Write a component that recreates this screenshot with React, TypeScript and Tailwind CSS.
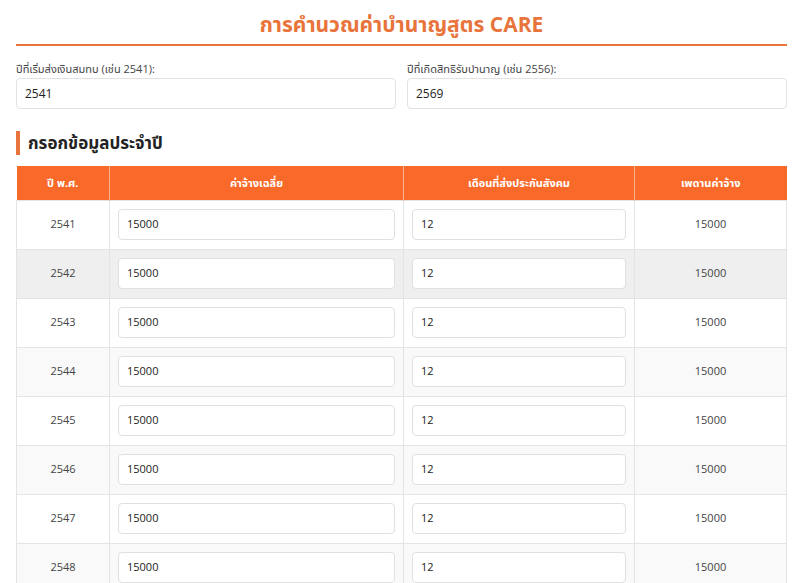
import React from "react";

const years = [2541, 2542, 2543, 2544, 2545, 2546, 2547, 2548];

export default function App() {
  return (
    <div
      className="bg-white min-h-[583px] text-[#333]"
      style={{ fontFamily: '"Open Sans", "Noto Sans", "Noto Sans Thai", sans-serif' }}
    >
      <div className="ml-4 w-[771px]">
        <h1 className="pt-[10px] pb-[6px] border-b-2 border-[#e8743b] text-center text-[21px] leading-[28px] font-bold text-[#e8743b]">
          การคำนวณค่าบำนาญสูตร CARE
        </h1>
        <div className="mt-[15px] grid grid-cols-2 gap-[11px]">
          <div className="flex flex-col">
            <label className="text-[11px] leading-[16px] text-[#444] mb-[1px]">
              ปีที่เริ่มส่งเงินสมทบ (เช่น 2541):
            </label>
            <div className="h-[31px] border border-[#e2e2e2] rounded-[4px] flex items-center px-[8px] text-[12px] text-[#222]">
              2541
            </div>
          </div>
          <div className="flex flex-col">
            <label className="text-[11px] leading-[16px] text-[#444] mb-[1px]">
              ปีที่เกิดสิทธิรับบำนาญ (เช่น 2556):
            </label>
            <div className="h-[31px] border border-[#e2e2e2] rounded-[4px] flex items-center px-[8px] text-[12px] text-[#222]">
              2569
            </div>
          </div>
        </div>
        <h2 className="mt-[22px] border-l-4 border-[#e8743b] pl-[8px] h-[24px] flex items-center text-[17px] font-bold text-[#222]">
          กรอกข้อมูลประจำปี
        </h2>
        <table className="mt-[11px] w-full border-collapse text-[11px]">
          <thead>
            <tr className="bg-[#f96a2a] text-white h-[34px]">
              <th className="w-[93px] border-r border-[#f7b38f] font-bold">ปี พ.ศ.</th>
              <th className="w-[294px] border-r border-[#f7b38f] font-bold">ค่าจ้างเฉลี่ย</th>
              <th className="w-[231px] border-r border-[#f7b38f] font-bold">เดือนที่ส่งประกันสังคม</th>
              <th className="font-bold">เพดานค่าจ้าง</th>
            </tr>
          </thead>
          <tbody>
            {years.map((y, i) => {
              const bg = i === 1 ? "bg-[#efefef]" : i % 2 === 1 ? "bg-[#f9f9f9]" : "bg-white";
              return (
                <tr key={y} className={`${bg} h-[49px]`}>
                  <td className="border border-[#e4e4e4] text-center text-[#444]">{y}</td>
                  <td className="border border-[#e4e4e4] px-[8px]">
                    <div className="h-[31px] bg-white border border-[#e0e0e0] rounded-[4px] flex items-center px-[8px] text-[11px] text-[#222]">
                      15000
                    </div>
                  </td>
                  <td className="border border-[#e4e4e4] px-[8px]">
                    <div className="h-[31px] bg-white border border-[#e0e0e0] rounded-[4px] flex items-center px-[8px] text-[11px] text-[#222]">
                      12
                    </div>
                  </td>
                  <td className="border border-[#e4e4e4] text-center text-[#444]">15000</td>
                </tr>
              );
            })}
          </tbody>
        </table>
      </div>
    </div>
  );
}
